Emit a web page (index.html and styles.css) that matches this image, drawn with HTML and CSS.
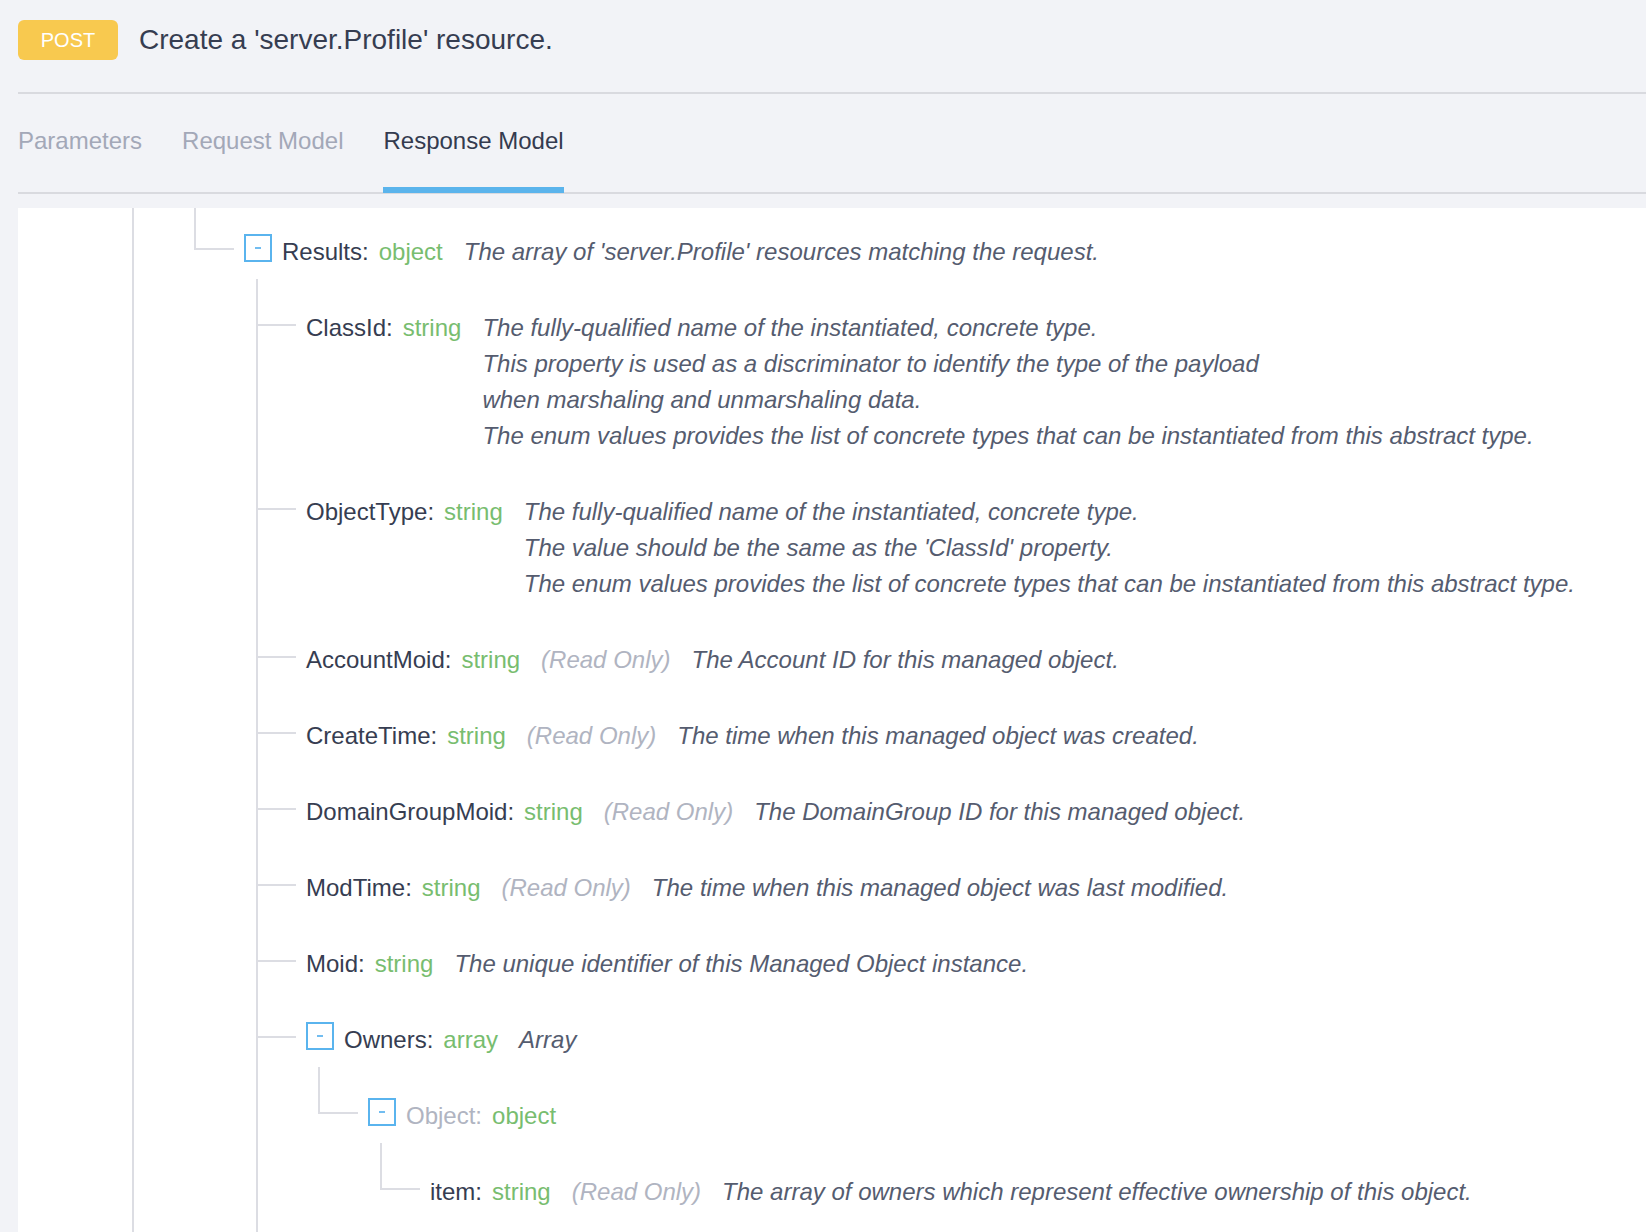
FILE: index.html
```html
<!DOCTYPE html>
<html lang="en">
<head>
<meta charset="utf-8">
<title>POST server.Profile</title>
<link rel="stylesheet" href="styles.css">
</head>
<body>
<div class="page">
  <header class="header">
    <span class="badge">POST</span>
    <h1 class="title">Create a 'server.Profile' resource.</h1>
  </header>
  <nav class="tabs">
    <span class="tab">Parameters</span>
    <span class="tab">Request Model</span>
    <span class="tab active">Response Model</span>
  </nav>
  <main class="panel">
    <div class="children root">
      <div class="node offscreen">
        <div class="children">
          <div class="node">
            <div class="row">
              <span class="toggle"><span class="minus"></span></span>
              <span class="name">Results:</span>
              <span class="type">object</span>
              <div class="desc"><span>The array of 'server.Profile' resources matching the request.</span></div>
            </div>
            <div class="children">
              <div class="node">
                <div class="row">
                  <span class="name">ClassId:</span>
                  <span class="type">string</span>
                  <div class="desc">
                    <span>The fully-qualified name of the instantiated, concrete type.</span>
                    <span>This property is used as a discriminator to identify the type of the payload</span>
                    <span>when marshaling and unmarshaling data.</span>
                    <span>The enum values provides the list of concrete types that can be instantiated from this abstract type.</span>
                  </div>
                </div>
              </div>
              <div class="node">
                <div class="row">
                  <span class="name">ObjectType:</span>
                  <span class="type">string</span>
                  <div class="desc">
                    <span>The fully-qualified name of the instantiated, concrete type.</span>
                    <span>The value should be the same as the 'ClassId' property.</span>
                    <span>The enum values provides the list of concrete types that can be instantiated from this abstract type.</span>
                  </div>
                </div>
              </div>
              <div class="node">
                <div class="row">
                  <span class="name">AccountMoid:</span>
                  <span class="type">string</span>
                  <span class="readonly">(Read Only)</span>
                  <div class="desc"><span>The Account ID for this managed object.</span></div>
                </div>
              </div>
              <div class="node">
                <div class="row">
                  <span class="name">CreateTime:</span>
                  <span class="type">string</span>
                  <span class="readonly">(Read Only)</span>
                  <div class="desc"><span>The time when this managed object was created.</span></div>
                </div>
              </div>
              <div class="node">
                <div class="row">
                  <span class="name">DomainGroupMoid:</span>
                  <span class="type">string</span>
                  <span class="readonly">(Read Only)</span>
                  <div class="desc"><span>The DomainGroup ID for this managed object.</span></div>
                </div>
              </div>
              <div class="node">
                <div class="row">
                  <span class="name">ModTime:</span>
                  <span class="type">string</span>
                  <span class="readonly">(Read Only)</span>
                  <div class="desc"><span>The time when this managed object was last modified.</span></div>
                </div>
              </div>
              <div class="node">
                <div class="row">
                  <span class="name">Moid:</span>
                  <span class="type">string</span>
                  <div class="desc"><span>The unique identifier of this Managed Object instance.</span></div>
                </div>
              </div>
              <div class="node cont">
                <div class="row">
                  <span class="toggle"><span class="minus"></span></span>
                  <span class="name">Owners:</span>
                  <span class="type">array</span>
                  <div class="desc"><span>Array</span></div>
                </div>
                <div class="children">
                  <div class="node">
                    <div class="row">
                      <span class="toggle"><span class="minus"></span></span>
                      <span class="name muted">Object:</span>
                      <span class="type">object</span>
                    </div>
                    <div class="children">
                      <div class="node">
                        <div class="row">
                          <span class="name">item:</span>
                          <span class="type">string</span>
                          <span class="readonly">(Read Only)</span>
                          <div class="desc"><span>The array of owners which represent effective ownership of this object.</span></div>
                        </div>
                      </div>
                    </div>
                  </div>
                </div>
              </div>
            </div>
          </div>
        </div>
      </div>
    </div>
  </main>
</div>
</body>
</html>
```

FILE: styles.css
```css
html, body {
  margin: 0;
  padding: 0;
  height: 100%;
  overflow: hidden;
}

body {
  background: #f2f3f7;
  font-family: "Liberation Sans", Arial, Helvetica, sans-serif;
  color: #363d51;
}

.page {
  height: 100%;
  display: flex;
  flex-direction: column;
  padding-left: 18px;
  box-sizing: border-box;
}

.header {
  display: flex;
  align-items: center;
  gap: 21px;
  padding-top: 20px;
  height: 72px;
  border-bottom: 2px solid #d9dadf;
}

.badge {
  width: 100px;
  height: 40px;
  box-sizing: border-box;
  background: #f8c94f;
  color: #ffffff;
  border-radius: 6px;
  font-size: 20px;
  display: flex;
  align-items: center;
  justify-content: center;
  align-self: flex-start;
}

.title {
  margin: 0;
  font-size: 28px;
  font-weight: normal;
  color: #363d51;
  line-height: 40px;
  align-self: flex-start;
}

.tabs {
  display: flex;
  gap: 40px;
  border-bottom: 2px solid #d9dadf;
}

.tab {
  font-size: 24px;
  line-height: 36px;
  padding: 29px 0 28px;
  border-bottom: 6px solid transparent;
  margin-bottom: -1px;
  color: #a3a8b8;
}

.tab.active {
  color: #343b4f;
  border-bottom-color: #5bb4ec;
}

.panel {
  flex: 1;
  margin-top: 14px;
  padding-top: 6px;
  background: #ffffff;
  overflow: hidden;
  position: relative;
}

/* tree */
.children {
  position: relative;
  padding-left: 62px;
}

.children.root {
  margin-left: 102px;
}

.children::before {
  content: "";
  position: absolute;
  left: 12px;
  top: -11px;
  width: 2px;
  height: 11px;
  background: #dcdde3;
}

.children.root::before {
  display: none;
}

.node {
  position: relative;
}

.children > .node::before {
  content: "";
  position: absolute;
  left: -50px;
  top: 0;
  bottom: 0;
  width: 2px;
  background: #dcdde3;
}

.children > .node::after {
  content: "";
  position: absolute;
  left: -50px;
  top: 34px;
  width: 40px;
  height: 2px;
  background: #dcdde3;
}

.children > .node:last-child::before {
  bottom: auto;
  height: 36px;
}

.children > .node.cont::before {
  height: auto;
  bottom: -600px;
}

.children > .node.offscreen::before {
  top: -100px;
  height: auto;
  bottom: -600px;
}

.children > .node.offscreen::after {
  display: none;
}

.row {
  display: flex;
  align-items: flex-start;
  padding: 20px 0;
  font-size: 24px;
  line-height: 36px;
  white-space: nowrap;
}

.toggle {
  width: 28px;
  height: 28px;
  box-sizing: border-box;
  border: 2px solid #5ab4ee;
  margin-right: 10px;
  display: flex;
  align-items: center;
  justify-content: center;
  flex: none;
}

.minus {
  width: 6px;
  height: 2px;
  background: #72bdf0;
}

.name {
  color: #363d51;
}

.name.muted {
  color: #b0b4c1;
}

.type {
  color: #78bd6f;
  margin-left: 10px;
}

.readonly {
  color: #b0b4c1;
  font-style: italic;
  margin-left: 21px;
}

.desc {
  display: flex;
  flex-direction: column;
  margin-left: 21px;
  font-style: italic;
  color: #555c6f;
}
```
